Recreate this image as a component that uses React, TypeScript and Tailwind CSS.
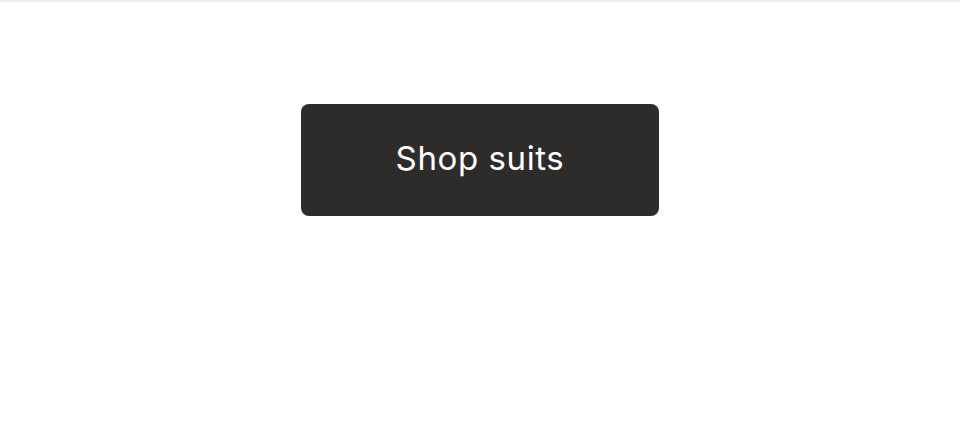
export default function App() {
  return (
    <div className="min-h-[421px] w-full bg-white border-t-2 border-[#ececec] flex justify-center pt-[102px]">
      <button
        type="button"
        className="w-[358px] h-[112px] rounded-[8px] bg-[#2d2c2b] text-white text-[33px] leading-none tracking-[0.6px] font-['Inter',sans-serif] font-normal flex items-center justify-center pb-[3px]"
      >
        Shop suits
      </button>
    </div>
  );
}
